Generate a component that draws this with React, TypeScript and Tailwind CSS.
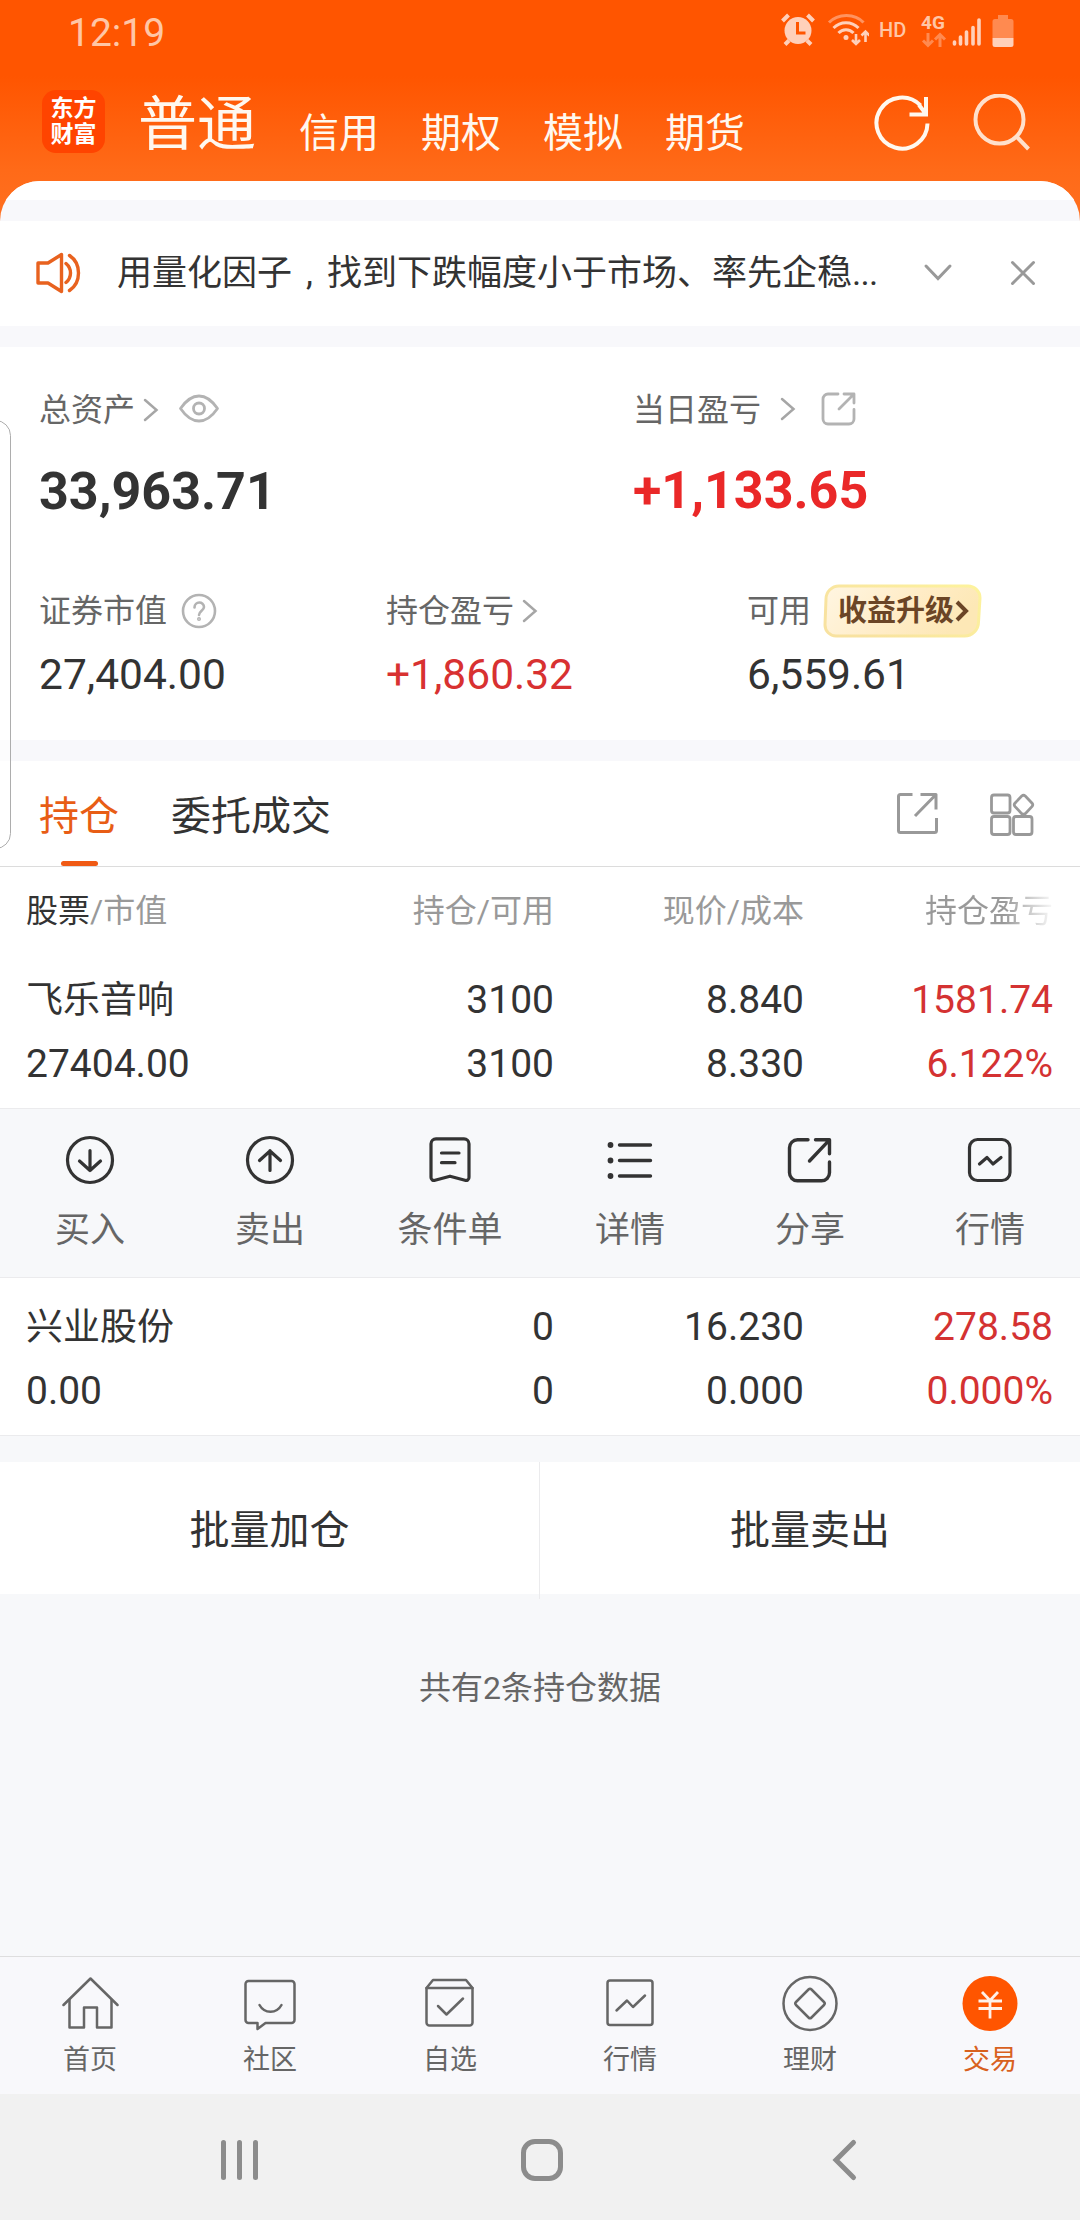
import React from 'react';

const accounts = ['信用', '期权', '模拟', '期货'];

const actions = [
  { label: '买入', icon: <BuyIcon /> },
  { label: '卖出', icon: <SellIcon /> },
  { label: '条件单', icon: <OrderIcon /> },
  { label: '详情', icon: <DetailIcon /> },
  { label: '分享', icon: <ShareActionIcon /> },
  { label: '行情', icon: <QuoteIcon /> },
];

const tabs = [
  { label: '首页', icon: <HomeIcon /> },
  { label: '社区', icon: <CommunityIcon /> },
  { label: '自选', icon: <WatchlistIcon /> },
  { label: '行情', icon: <MarketIcon /> },
  { label: '理财', icon: <WealthIcon /> },
  { label: '交易', icon: <TradeIcon />, active: true },
];

const positions = [
  { name: '飞乐音响', value: '27404.00', hold: '3100', usable: '3100', price: '8.840', cost: '8.330', profit: '1581.74', rate: '6.122%' },
  { name: '兴业股份', value: '0.00', hold: '0', usable: '0', price: '16.230', cost: '0.000', profit: '278.58', rate: '0.000%' },
];

function BuyIcon() {
  return (
    <svg width="52" height="52" viewBox="0 0 52 52" fill="none" stroke="#333" strokeWidth="3.2" strokeLinecap="round" strokeLinejoin="round">
      <circle cx="26" cy="26" r="22.5" />
      <path d="M26 16.5v20M15.5 27L26 36.5 36.5 27" />
    </svg>
  );
}

function SellIcon() {
  return (
    <svg width="52" height="52" viewBox="0 0 52 52" fill="none" stroke="#333" strokeWidth="3.2" strokeLinecap="round" strokeLinejoin="round">
      <circle cx="26" cy="26" r="22.5" />
      <path d="M26 36.5v-20M15.5 26.5L26 17l10.5 9.5" />
    </svg>
  );
}

function OrderIcon() {
  return (
    <svg width="52" height="52" viewBox="0 0 52 52" fill="none" stroke="#333" strokeWidth="3.2" strokeLinecap="round" strokeLinejoin="round">
      <path d="M12 4.8h28a5 5 0 0 1 5 5v33.5a3 3 0 0 1-4 3L26 42.2 11 46.300a3 3 0 0 1-4-3V9.800a5 5 0 0 1 5-5z" />
      <path d="M17.5 19h17.500M17.5 28.7H31" />
    </svg>
  );
}

function DetailIcon() {
  return (
    <svg width="52" height="52" viewBox="0 0 52 52" fill="#333" stroke="#333" strokeWidth="3.4" strokeLinecap="round">
      <path d="M15.5 11h31M15.5 26.500h31M15.5 42h31" />
      <circle cx="6.5" cy="11" r="1.2" />
      <circle cx="6.5" cy="26.5" r="1.2" />
      <circle cx="6.5" cy="42" r="1.2" />
    </svg>
  );
}

function ShareActionIcon() {
  return (
    <svg width="52" height="52" viewBox="0 0 52 52" fill="none" stroke="#333" strokeWidth="3.4" strokeLinecap="round" strokeLinejoin="round">
      <path d="M24 5.8H13.5a8 8 0 0 0-8 8v25a8 8 0 0 0 8 8h24a8 8 0 0 0 8-8V28" />
      <path d="M31.5 5.8h14v14M45 6.3L25.500 27" />
    </svg>
  );
}

function QuoteIcon() {
  return (
    <svg width="52" height="52" viewBox="0 0 52 52" fill="none" stroke="#333" strokeWidth="3.2" strokeLinecap="round" strokeLinejoin="round">
      <rect x="5.5" y="5.5" width="40.5" height="41" rx="8" />
      <path d="M15.5 30l7.500-6.500 6 6.500 8-6.500" />
    </svg>
  );
}

function HomeIcon() {
  return (
    <svg width="58" height="58" viewBox="0 0 58 58" fill="none" stroke="#666" strokeWidth="2.5" strokeLinecap="round" strokeLinejoin="round">
      <path d="M2.5 31L29.5 4.500 56.500 31" />
      <path d="M8.500 26v27.500H23V33.500h13v20h14.500V26" />
    </svg>
  );
}

function CommunityIcon() {
  return (
    <svg width="58" height="58" viewBox="0 0 58 58" fill="none" stroke="#666" strokeWidth="2.5" strokeLinecap="round" strokeLinejoin="round">
      <path d="M7.500 7h43a3 3 0 0 1 3 3v36a3 3 0 0 1-3 3H24.500l-8 6V49h-9a3 3 0 0 1-3-3V10a3 3 0 0 1 3-3z" />
      <path d="M18.500 31c5 9 17 9 22 0" />
    </svg>
  );
}

function WatchlistIcon() {
  return (
    <svg width="58" height="58" viewBox="0 0 58 58" fill="none" stroke="#666" strokeWidth="2.5" strokeLinecap="round" strokeLinejoin="round">
      <path d="M5.500 14L12 6h33l6.500 8" />
      <path d="M5.500 14h46v34.500a3 3 0 0 1-3 3h-40a3 3 0 0 1-3-3z" />
      <path d="M17 32l8.500 8.500L42 24.500" />
    </svg>
  );
}

function MarketIcon() {
  return (
    <svg width="58" height="58" viewBox="0 0 58 58" fill="none" stroke="#666" strokeWidth="2.5" strokeLinecap="round" strokeLinejoin="round">
      <rect x="6.5" y="6.5" width="45" height="44.5" rx="2.5" />
      <path d="M15.500 36.500L26 26.500l6 6.500L44 21.500" />
    </svg>
  );
}

function WealthIcon() {
  return (
    <svg width="58" height="58" viewBox="0 0 58 58" fill="none" stroke="#666" strokeWidth="2.5" strokeLinejoin="round">
      <circle cx="29" cy="29.5" r="26.5" />
      <path d="M27.500 15.500q1.500-1.500 3 0l12.500 12.500q1.500 1.500 0 3l-12.500 12.500q-1.500 1.500-3 0l-12.500-12.500q-1.500-1.500 0-3z" />
    </svg>
  );
}

function TradeIcon() {
  return (
    <svg width="58" height="58" viewBox="0 0 58 58" fill="none" stroke="#fff1e9" strokeWidth="2.8">
      <circle cx="29" cy="29.5" r="27.5" fill="#ff5500" stroke="none" />
      <path d="M21 18l8 8.500L37 18M29 26v18.500M17.500 27h23.500M17.500 34.500h23.500" />
    </svg>
  );
}

const Chevron = ({ className = '' }: { className?: string }) => (
  <svg className={className} width="16" height="24" viewBox="0 0 16 24" fill="none" stroke="#a6a6a6" strokeWidth="2.5" strokeLinecap="round">
    <path d="M2 2l11.500 10L2 22" />
  </svg>
);

const StatusBar = () => (
  <div className="flex h-16 items-center pl-[68px] text-[#ffc6a6]">
    <span className="w-[711px] pt-[2px] text-[39px] leading-none">12:19</span>
    <svg width="36" height="36" viewBox="0 0 36 36" className="mb-[2px] ml-px shrink-0">
      <circle cx="18" cy="17.5" r="13.5" fill="#ffd0ba" />
      <path d="M2.500 8L8.500 2M33.500 8l-6-6M9 27.500l-4 4M27 27.500l4 4" stroke="#ffd0ba" strokeWidth="4" />
      <path d="M17.500 9v11h8" fill="none" stroke="#ff5500" strokeWidth="3" />
    </svg>
    <svg width="42" height="36" viewBox="0 0 42 36" fill="none" strokeWidth="3" className="mb-[2px] ml-[11px] shrink-0">
      <path d="M2 9.500c9-9.500 26-9.500 34.500 0" stroke="#ff935f" />
      <path d="M6.500 15c7-7 18-7 25 0M11.500 20c4-4.500 11-4.500 15 0" stroke="#ffd0ba" />
      <circle cx="19" cy="24.5" r="2.5" fill="#ffd0ba" />
      <path d="M29 21v10M25 27l4 4 4-4M38.500 29V19M34.500 22.500l4-4 4 4" stroke="#ffd0ba" strokeWidth="2.6" />
    </svg>
    <span className="mb-[4px] ml-[10px] w-[42px] text-[20px] font-medium leading-none">HD</span>
    <div className="mb-[2px] flex h-9 w-[28px] flex-col">
      <span className="text-[19px] font-bold leading-[19px]">4G</span>
      <svg width="26" height="16" viewBox="0 0 26 16" fill="none" stroke="#ff8a50" strokeWidth="3">
        <path d="M7 1v12M2 8.500l5 5 5-5M19 15V3M14 7.500l5-5 5 5" />
      </svg>
    </div>
    <svg width="32" height="32" viewBox="0 0 32 32" fill="none" stroke="#ffd0ba" strokeWidth="3.6" strokeLinecap="round" className="ml-[3px] shrink-0">
      <path d="M2.500 26v2M8.500 21v7M14.500 16v12M21 11.500V28M27 4v24" />
    </svg>
    <svg width="22" height="34" viewBox="0 0 22 34" className="mb-[2px] ml-[8px] shrink-0">
      <path d="M6 1h10v4h3a2.500 2.500 0 0 1 2.500 2.500V24h-21V7.500A2.500 2.500 0 0 1 3 5h3z" fill="#ff8a50" />
      <path d="M.500 24h21v6.500A2.500 2.500 0 0 1 19 33H3a2.500 2.500 0 0 1-2.500-2.500z" fill="#ffd0ba" />
    </svg>
  </div>
);

const Header = () => (
  <div className="flex h-[117px] pl-[42px] text-[#fff8ef]">
    <div className="mt-[26px] flex h-[63px] w-[63px] flex-col items-center justify-center rounded-[14px] bg-[#ff4400] text-[23px] font-bold leading-[26px] text-white">
      <span>东方</span>
      <span>财富</span>
    </div>
    <span className="ml-[33px] mt-[27px] w-[161px] text-[59px] leading-[68px]">普通</span>
    <div className="mt-[45px] flex w-[574px] gap-[42px] text-[40px] leading-[50px]">
      {accounts.map((name) => (
        <span key={name}>{name}</span>
      ))}
    </div>
    <svg width="60" height="60" viewBox="0 0 60 60" fill="none" stroke="#fff8ef" strokeWidth="4" className="mt-[30px] shrink-0">
      <path d="M54.500 29.500A25.500 25.500 0 1 1 47.500 11.500" />
      <path d="M53 3v17.500H36.500M46 11l7 9" />
    </svg>
    <svg width="60" height="60" viewBox="0 0 60 60" fill="none" stroke="#ffe0cc" strokeWidth="4" className="ml-[40px] mt-[30px] shrink-0">
      <circle cx="26.5" cy="25.5" r="24" />
      <path d="M42.500 41.500l13 13.500" />
    </svg>
  </div>
);

const Notice = () => (
  <div className="flex h-[105px] items-center bg-white pl-[34px] text-[#333]">
    <svg width="50" height="44" viewBox="0 0 50 44" fill="none" stroke="#e8621f" strokeWidth="3.4" strokeLinecap="round" strokeLinejoin="round" className="mb-[2px]">
      <path d="M4 12h10l13.500-8.500v37L14 32H4z" />
      <path d="M32 12.500c6 5 6 14 0 19M35.500 4.500c12 8 12 27 0 35" />
    </svg>
    <p className="ml-[33px] flex w-[806px] text-[35px] leading-[50px]">
      用量化因子<span className="w-[35px] text-center">,</span>找到下跌幅度小于市场、率先企稳<span className="-tracking-[0.8px]">...</span>
    </p>
    <svg width="30" height="20" viewBox="0 0 30 20" fill="none" stroke="#999" strokeWidth="3" strokeLinecap="round" className="mb-[2px]">
      <path d="M3 3l12 12.500L27 3" />
    </svg>
    <svg width="28" height="28" viewBox="0 0 28 28" fill="none" stroke="#999" strokeWidth="3" strokeLinecap="round" className="mb-[2px] ml-[56px]">
      <path d="M3.500 3.500l21 21M24.500 3.500l-21 21" />
    </svg>
  </div>
);

const Summary = () => (
  <div className="h-[393px] bg-white pl-[39px] pt-[38px] text-[#333]">
    <div className="flex">
      <div className="w-[594px]">
        <div className="flex h-[50px] items-center text-[32px] text-[#666]">
          总资产
          <Chevron className="ml-[8px]" />
          <svg width="42" height="32" viewBox="0 0 42 32" fill="none" stroke="#b3b3b3" strokeWidth="2.8" className="mb-[3px] ml-[19px]">
            <path d="M2.500 15.500C9 6 15 3 21 3s12 3 18.500 12.500C33 25 27 28 21 28S9 25 2.500 15.500z" strokeLinejoin="round" />
            <circle cx="21" cy="15.5" r="5.5" />
          </svg>
        </div>
        <div className="mt-[27px] text-[52px] font-bold leading-[60px]">33,963.71</div>
      </div>
      <div>
        <div className="flex h-[50px] items-center text-[32px] text-[#666]">
          当日盈亏
          <Chevron className="mb-[2px] ml-[19px]" />
          <svg width="36" height="36" viewBox="0 0 36 36" fill="none" stroke="#b3b3b3" strokeWidth="2.8" strokeLinecap="round" strokeLinejoin="round" className="mb-[2px] ml-[25px]">
            <path d="M17 3H7a5 5 0 0 0-5 5v20a5 5 0 0 0 5 5h21a5 5 0 0 0 5-5V18.500M23 3h10v9M32.500 3.500L18 18" />
          </svg>
        </div>
        <div className="mt-[26px] text-[52px] font-bold leading-[60px] text-[#ea2828]">+1,133.65</div>
      </div>
    </div>
    <div className="mt-[61px] flex">
      <div className="w-[347px]">
        <div className="flex h-[56px] items-center text-[32px] text-[#666]">
          证券市值
          <svg width="36" height="36" viewBox="0 0 36 36" fill="none" stroke="#b3b3b3" strokeWidth="2.6" strokeLinecap="round" className="ml-[14px]">
            <circle cx="18" cy="18" r="16" />
            <path d="M13.500 14.500c0-6.500 9.500-6.500 9.500-.5 0 3.500-5 4-5 8" />
            <circle cx="18" cy="26" r=".7" />
          </svg>
        </div>
        <div className="mt-[10px] text-[42.5px] leading-[52px]">27,404.00</div>
      </div>
      <div className="w-[361px]">
        <div className="flex h-[56px] items-center text-[32px] text-[#666]">
          持仓盈亏
          <Chevron className="ml-[8px]" />
        </div>
        <div className="mt-[10px] text-[42.5px] leading-[52px] text-[#d83131]">+1,860.32</div>
      </div>
      <div>
        <div className="flex h-[56px] items-center text-[32px] text-[#666]">
          可用
          <div className="relative ml-[12px] flex h-[54px] w-[160px] items-center pl-[15px] text-[29px] font-bold text-[#6b4526]">
            <svg width="160" height="54" viewBox="0 0 160 54" className="absolute left-0 top-0">
              <defs>
                <linearGradient id="badgeFill" x1="0" x2="1" y1="0" y2="0.3">
                  <stop offset="0" stopColor="#fff6e2" />
                  <stop offset="0.6" stopColor="#ffecc6" />
                  <stop offset="1" stopColor="#fde8b6" />
                </linearGradient>
                <linearGradient id="badgeLine" x1="0" x2="1" y1="0.5" y2="0">
                  <stop offset="0" stopColor="#f8e2a0" />
                  <stop offset="1" stopColor="#fdf39d" />
                </linearGradient>
              </defs>
              <path d="M16 2h128a12 12 0 0 1 13 12l-1.500 24a14 14 0 0 1-14 14H13A11 11 0 0 1 2 41l1-26A13 13 0 0 1 16 2z" fill="url(#badgeFill)" stroke="url(#badgeLine)" strokeWidth="3" />
            </svg>
            <span className="relative pt-[2px]">收益升级</span>
            <svg width="16" height="24" viewBox="0 0 16 24" fill="none" stroke="#6b4526" strokeWidth="4" className="relative">
              <path d="M3 3l9 9-9 9" />
            </svg>
          </div>
        </div>
        <div className="mt-[10px] text-[42.5px] leading-[52px]">6,559.61</div>
      </div>
    </div>
  </div>
);

const HoldingTabs = () => (
  <div className="flex h-[106px] border-b border-[#dcdcdc] bg-white pl-[39px] text-[40px]">
    <div className="flex w-20 flex-col items-center text-[#e85d15]">
      <span className="mt-[30px] h-[70px] leading-[52px]">持仓</span>
      <div className="h-[5px] w-[37px] shrink-0 rounded-full bg-[#f05a14]" />
    </div>
    <span className="ml-[52px] mt-[30px] w-[723px] leading-[52px] text-[#333]">委托成交</span>
    <svg width="46" height="46" viewBox="0 0 46 46" fill="none" stroke="#999" strokeWidth="3" strokeLinejoin="round" className="mt-[29px]">
      <path d="M18.500 4.500H6.500a2 2 0 0 0-2 2v34a2 2 0 0 0 2 2h34a2 2 0 0 0 2-2V28M26.500 4.500h15.500v15M41.500 5L21 26" />
    </svg>
    <svg width="48" height="48" viewBox="0 0 48 48" fill="none" stroke="#999" strokeWidth="2.8" className="ml-[48px] mt-[29px]">
      <rect x="3.5" y="5" width="18.5" height="18" rx="2.5" />
      <rect x="3.5" y="26.5" width="18.5" height="18" rx="2.5" />
      <rect x="25.5" y="26.5" width="18.5" height="18" rx="2.5" />
      <path d="M33.700 6q1.800-1.400 3.600 0l6.800 7.200q1.300 1.600 0 3.200l-6.800 7.200q-1.800 1.400-3.600 0l-6.800-7.200q-1.300-1.600 0-3.200z" />
    </svg>
  </div>
);

const Position = ({ item }: { item: (typeof positions)[number] }) => (
  <div className="grid grid-cols-[276px_252px_250px_249px] bg-white pl-[26px] text-[39px] leading-[64px] text-[#333]">
    <span className="pt-px text-[37px] leading-[63px]">{item.name}</span>
    <span className="text-right">{item.hold}</span>
    <span className="text-right">{item.price}</span>
    <span className="text-right text-[#d43232]">{item.profit}</span>
    <span>{item.value}</span>
    <span className="text-right">{item.usable}</span>
    <span className="text-right">{item.cost}</span>
    <span className="text-right text-[#d43232]">{item.rate}</span>
  </div>
);

const App: React.FC = () => {
  return (
    <div className="relative flex h-[2220px] w-[1080px] flex-col overflow-hidden bg-[#f7f8fa] font-['Roboto','Noto_Sans_CJK_SC',sans-serif]">
      <div className="h-[221px] shrink-0 bg-[linear-gradient(#ff5500_0px,#ff5500_76px,#ff6a18_170px,#ff7020_222px)]">
        <StatusBar />
        <Header />
        <div className="h-[40px] overflow-hidden rounded-t-[42px] bg-[#f8f8fb]">
          <div className="h-[19px] bg-white" />
        </div>
      </div>

      <Notice />
      <div className="h-[21px] shrink-0 bg-[#f8f8fb]" />
      <Summary />
      <div className="h-[21px] shrink-0 bg-[#f8f8fb]" />
      <HoldingTabs />

      {/* Holdings table */}
      <div className="grid h-[101px] grid-cols-[276px_252px_250px_249px] bg-white pl-[26px] pt-[19px] text-[32px] leading-[50px] text-[#999]">
        <span><span className="text-[#333]">股票</span>/市值</span>
        <span className="text-right">持仓/可用</span>
        <span className="text-right">现价/成本</span>
        <span className="bg-[linear-gradient(90deg,#999_200px,#fff_252px)] bg-clip-text text-right text-transparent">持仓盈亏</span>
      </div>
      <div className="h-[140px] bg-white">
        <Position item={positions[0]} />
      </div>
      <div className="grid h-[170px] grid-cols-6 border-y border-[#ebebed] bg-[#f7f8fa]">
        {actions.map((item) => (
          <div key={item.label} className="flex flex-col items-center pt-[25px]">
            {item.icon}
            <span className="mt-[20px] text-[35px] leading-[50px] text-[#666]">{item.label}</span>
          </div>
        ))}
      </div>
      <div className="h-[158px] border-b border-[#ebebed] bg-white pt-[17px]">
        <Position item={positions[1]} />
      </div>

      <div className="mt-[26px] grid h-[132px] grid-cols-2 bg-white text-center text-[40px] leading-[137px] text-[#333]">
        <span className="border-r border-[#ebebed]">批量加仓</span>
        <span>批量卖出</span>
      </div>
      <p className="mt-[69px] text-center text-[32px] leading-[50px] text-[#666]">共有2条持仓数据</p>

      {/* Bottom navigation */}
      <div className="mt-auto grid h-[138px] shrink-0 grid-cols-6 border-t border-[#dedede] bg-[#f8f8fb]">
        {tabs.map((tab) => (
          <div key={tab.label} className="flex flex-col items-center pt-[17px]">
            {tab.icon}
            <span className={tab.active ? 'mt-[8px] text-[27px] leading-[40px] text-[#d8611e]' : 'mt-[8px] text-[27px] leading-[40px] text-[#666]'}>{tab.label}</span>
          </div>
        ))}
      </div>
      <div className="flex h-[126px] shrink-0 items-center bg-[#f1f1f1] pl-[221px] pt-[6px]">
        <div className="flex w-[300px] gap-[11px]">
          <div className="h-10 w-[5px] rounded-full bg-[#8c8c8c]" />
          <div className="h-10 w-[5px] rounded-full bg-[#8c8c8c]" />
          <div className="h-10 w-[5px] rounded-full bg-[#8c8c8c]" />
        </div>
        <div className="h-[42px] w-[42px] rounded-[14px] border-[5px] border-[#8c8c8c]" />
        <svg width="28" height="44" viewBox="0 0 28 44" fill="none" stroke="#8c8c8c" strokeWidth="5" strokeLinecap="round" className="ml-[268px]">
          <path d="M22.500 4.500L5 22l17.500 17.500" />
        </svg>
      </div>

      {/* Edge panel handle, slides over the page */}
      <div className="absolute -left-5 top-[420px] h-[429px] w-[31px] rounded-[16px] border border-[#adadad] bg-white/60" />
    </div>
  );
};

export default App;
